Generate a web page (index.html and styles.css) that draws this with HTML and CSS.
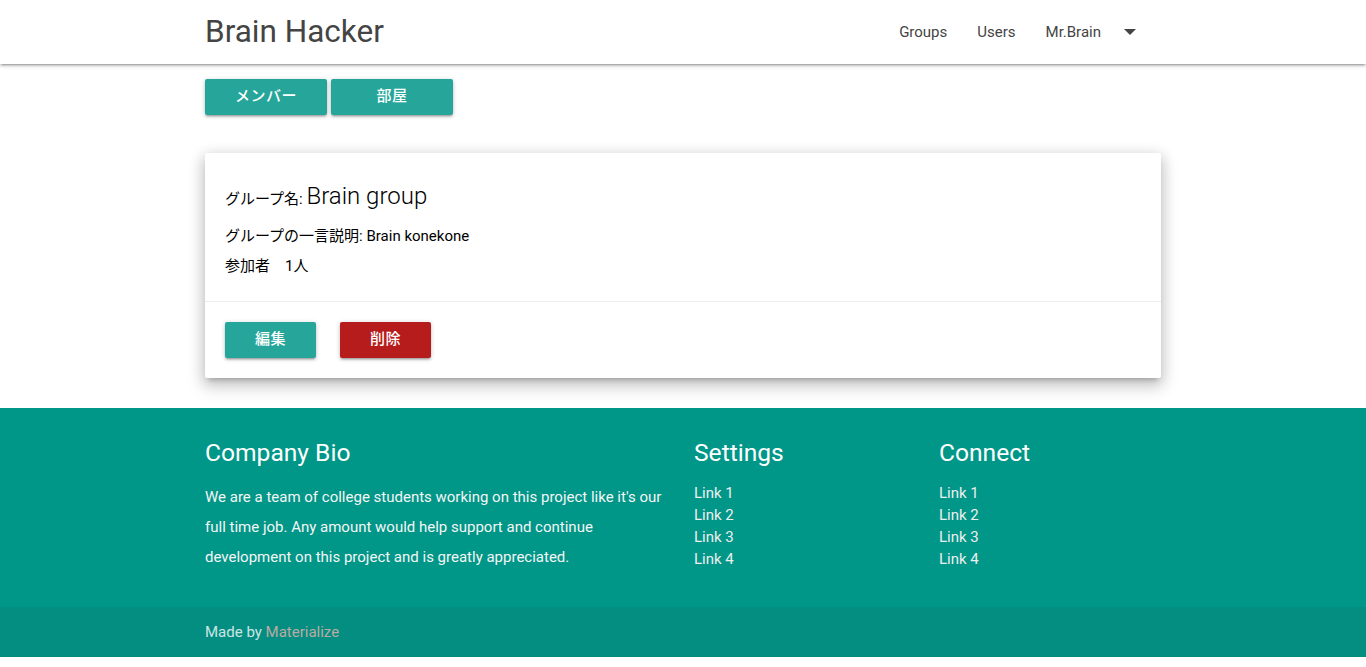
FILE: index.html
```html
<!DOCTYPE html>
<html lang="ja">
<head>
<meta charset="utf-8">
<title>Brain Hacker</title>
<link rel="stylesheet" href="styles.css">
</head>
<body>
<nav class="nav">
  <div class="container nav-wrapper">
    <a class="brand" href="#">Brain Hacker</a>
    <ul class="nav-links">
      <li><a href="#">Groups</a></li>
      <li><a href="#">Users</a></li>
      <li><a href="#" class="dropdown">Mr.Brain<svg class="caret" width="12" height="6" viewBox="0 0 12 6"><path d="M0 0h12L6 6z" fill="#444"/></svg></a></li>
    </ul>
  </div>
</nav>
<main class="container">
  <div class="tabs">
    <a class="btn btn-teal btn-tab" href="#">メンバー</a>
    <a class="btn btn-teal btn-tab" href="#">部屋</a>
  </div>
  <div class="card">
    <div class="card-content">
      <p class="line title-line"><span class="label">グループ名:</span> <span class="group-name">Brain group</span></p>
      <p class="line">グループの一言説明: Brain konekone</p>
      <p class="line">参加者　1人</p>
    </div>
    <div class="card-action">
      <a class="btn btn-teal btn-action" href="#">編集</a>
      <a class="btn btn-red btn-action" href="#">削除</a>
    </div>
  </div>
</main>
<footer class="page-footer">
  <div class="container footer-row">
    <div class="col-bio">
      <h5 class="footer-title">Company Bio</h5>
      <p class="bio">We are a team of college students working on this project like it's our full time job. Any amount would help support and continue development on this project and is greatly appreciated.</p>
    </div>
    <div class="col-links">
      <h5 class="footer-title">Settings</h5>
      <ul class="links">
        <li><a href="#">Link 1</a></li>
        <li><a href="#">Link 2</a></li>
        <li><a href="#">Link 3</a></li>
        <li><a href="#">Link 4</a></li>
      </ul>
    </div>
    <div class="col-links">
      <h5 class="footer-title">Connect</h5>
      <ul class="links">
        <li><a href="#">Link 1</a></li>
        <li><a href="#">Link 2</a></li>
        <li><a href="#">Link 3</a></li>
        <li><a href="#">Link 4</a></li>
      </ul>
    </div>
  </div>
  <div class="footer-copyright">
    <div class="container">Made by <a class="mat" href="#">Materialize</a></div>
  </div>
</footer>
</body>
</html>
```

FILE: styles.css
```css
* { box-sizing: border-box; }
html { font-size: 15px; }
body {
  margin: 0;
  font-family: Roboto, "Noto Sans CJK JP", sans-serif;
  color: rgba(0,0,0,0.87);
  background: #fff;
}
a { text-decoration: none; color: inherit; }
ul { list-style: none; margin: 0; padding: 0; }
p { margin: 0; }

.container { width: 956px; margin: 0 auto; }

.nav {
  height: 64px;
  background: #fff;
  box-shadow: 0 2px 2px 0 rgba(0,0,0,0.14), 0 3px 1px -2px rgba(0,0,0,0.12), 0 1px 5px 0 rgba(0,0,0,0.2);
  position: relative;
  z-index: 2;
}
.nav-wrapper {
  display: flex;
  justify-content: space-between;
  align-items: center;
  height: 64px;
}
.brand {
  font-size: 31.5px;
  color: #444;
  line-height: 64px;
}
.nav-links { display: flex; margin-right: 7px; }
.nav-links a {
  display: flex;
  align-items: center;
  padding: 0 15px;
  line-height: 64px;
  font-size: 15px;
  color: #444;
}
.nav-links li:first-child a { padding-left: 14px; }
.caret { margin-left: 23px; margin-right: 3px; }

.tabs { display: flex; gap: 4px; padding-top: 15px; }
.btn {
  display: inline-flex;
  justify-content: center;
  align-items: center;
  height: 36px;
  line-height: 34px;
  padding-bottom: 2px;
  color: #fff;
  font-size: 15px;
  font-weight: 500;
  letter-spacing: 0.5px;
  border-radius: 2px;
  box-shadow: 0 2px 2px 0 rgba(0,0,0,0.14), 0 3px 1px -2px rgba(0,0,0,0.12), 0 1px 5px 0 rgba(0,0,0,0.2);
}
.btn-teal { background: #26a69a; }
.btn-red { background: #b71c1c; }
.btn-tab { width: 122px; }
.btn-action { width: 91px; }

.card {
  margin: 38px 0 30px;
  background: #fff;
  border-radius: 2px;
  box-shadow: 0 8px 17px 2px rgba(0,0,0,0.14), 0 3px 14px 2px rgba(0,0,0,0.12), 0 5px 5px -3px rgba(0,0,0,0.2);
}
.card-content {
  padding: 27px 20px 20px;
  display: flex;
  flex-direction: column;
  color: #000;
}
.line { font-size: 15px; line-height: 30px; }
.title-line { line-height: 32px; margin-bottom: 6px; }
.group-name { font-size: 24px; font-weight: 300; }
.card-action {
  border-top: 1px solid rgba(160,160,160,0.2);
  padding: 20px;
  display: flex;
  gap: 24px;
}

.page-footer {
  background: #009688;
  color: #fff;
}
.footer-row {
  display: flex;
  padding: 30px 0 35px;
}
.col-bio { width: 477px; padding-right: 11px; }
.col-links { width: 245px; padding-left: 12px; }
.col-links:last-child { width: 234px; }
.footer-title {
  margin: 0 0 14px;
  font-size: 24.6px;
  font-weight: 400;
  line-height: 30px;
}
.bio {
  font-size: 15px;
  line-height: 30px;
  color: #f5f5f5;
}
.col-links .footer-title { margin-bottom: 14px; }
.links li { font-size: 15px; line-height: 22px; }
.links a { color: #eee; }
.footer-copyright {
  height: 50px;
  line-height: 50px;
  background: rgba(51,51,51,0.08);
  color: rgba(255,255,255,0.8);
  font-size: 15px;
}
.mat { color: #bcaaa4; }
```
